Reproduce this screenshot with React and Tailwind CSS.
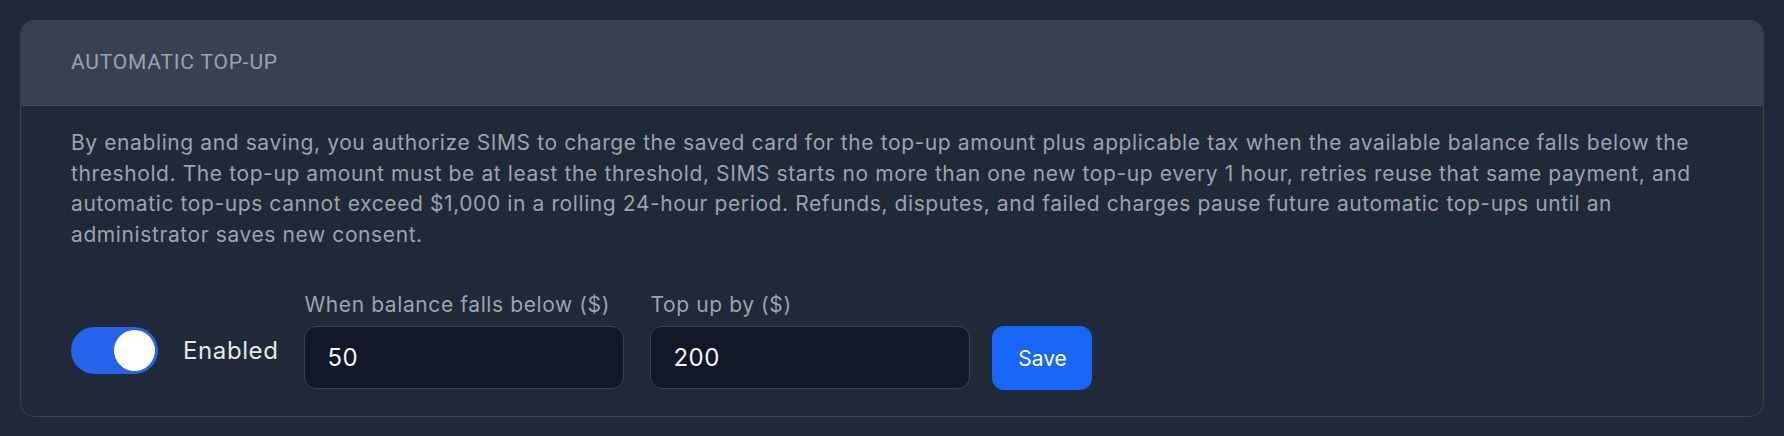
import React, { useState } from 'react';

const font = { fontFamily: 'Inter, "Noto Sans", sans-serif' };

const App = () => {
  const [enabled, setEnabled] = useState(true);
  const [threshold, setThreshold] = useState('50');
  const [amount, setAmount] = useState('200');

  return (
    <div className="min-h-screen bg-[#1e293b] p-[20px]" style={font}>
      <div className="rounded-[14px] border border-[#374151] bg-[#1f2937] overflow-hidden">
        {/* HEADER */}
        <div className="h-[85px] flex items-center px-[50px] bg-[#374151] border-b border-[#3f4a5c]">
          <h2 className="text-[21px] tracking-[0.8px] font-normal uppercase text-[#9ca3af] font-['Roboto',sans-serif]">Automatic Top-Up</h2>
        </div>

        {/* BODY */}
        <div className="px-[50px] pt-[22px] pb-[27px]">
          <p className="text-[21px] tracking-[0.6px] leading-[30.7px] text-[#9ca3af]">
            By enabling and saving, you authorize SIMS to charge the saved card for the top-up amount plus applicable tax when the available balance falls below the threshold. The top-up amount must be at least the threshold, SIMS starts no more than one new top-up every 1 hour, retries reuse that same payment, and automatic top-ups cannot exceed $1,000 in a rolling 24-hour period. Refunds, disputes, and failed charges pause future automatic top-ups until an administrator saves new consent.
          </p>

          <div className="mt-[38px] flex items-end gap-[26px]">
            <div className="flex items-center gap-[25px] mb-[15px]">
              <button
                onClick={() => setEnabled(!enabled)}
                className={`w-[87px] h-[47px] rounded-full flex items-center px-[3px] transition-colors ${enabled ? 'bg-[#2563eb] justify-end' : 'bg-[#4b5563] justify-start'}`}
              >
                <span className="block w-[41px] h-[41px] rounded-full bg-white" />
              </button>
              <span className="text-[24px] tracking-[0.6px] text-[#e5e7eb]">Enabled</span>
            </div>

            <label className="flex flex-col">
              <span className="text-[21px] tracking-[0.6px] text-[#9ca3af] mb-[6px]">When balance falls below ($)</span>
              <input
                value={threshold}
                onChange={(e) => setThreshold(e.target.value)}
                className="w-[320px] h-[63px] rounded-[12px] bg-[#111827] border border-[#374151] px-[22px] text-[24px] tracking-[0.5px] text-[#f3f4f6] outline-none"
              />
            </label>

            <label className="flex flex-col">
              <span className="text-[21px] tracking-[0.6px] text-[#9ca3af] mb-[6px]">Top up by ($)</span>
              <input
                value={amount}
                onChange={(e) => setAmount(e.target.value)}
                className="w-[320px] h-[63px] rounded-[12px] bg-[#111827] border border-[#374151] px-[22px] text-[24px] tracking-[0.5px] text-[#f3f4f6] outline-none"
              />
            </label>

            <button className="h-[64px] w-[100px] -ml-[4px] rounded-[12px] bg-[#1766f7] text-white text-[21px] mb-[-1px]">
              Save
            </button>
          </div>
        </div>
      </div>
    </div>
  );
};

export default App;
